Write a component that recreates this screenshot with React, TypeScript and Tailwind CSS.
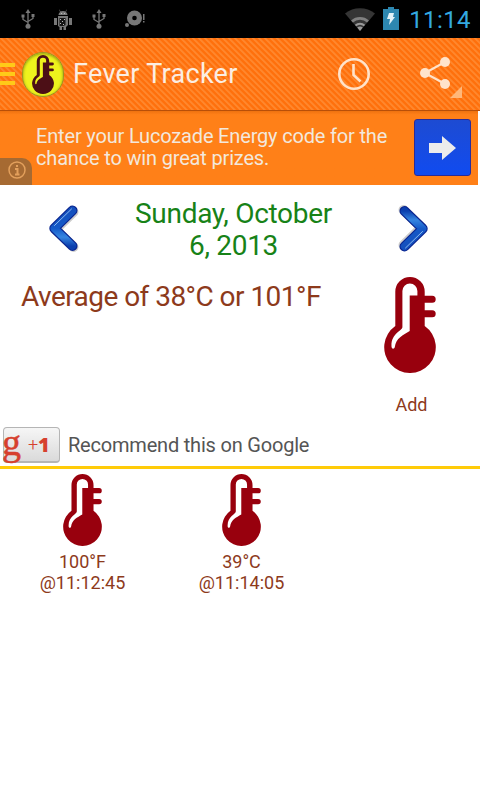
import type { ReactNode } from "react"

const readings = [
  { value: "100°F", time: "@11:12:45" },
  { value: "39°C", time: "@11:14:05" },
]

function Thermometer({ className }: { className: string }) {
  return (
    <svg viewBox="0 0 52 96" className={className} preserveAspectRatio="none">
      <path
        fill="currentColor"
        fillRule="evenodd"
        d="M11.3 14.7A14.7 14.7 0 0 1 40.7 14.7V18.7H48.2a3.5 3.5 0 0 1 0 7H40.7V33.3H48.2a3.5 3.5 0 0 1 0 7H40.7V49A25.8 25.8 0 1 1 11.3 49ZM18.4 14V50C18.4 54 7 56 7.5 69.5C7.8 72.5 10.3 72.3 10.8 70C12 61 19 58 25.7 54V18.5H33.4V14A7.5 7.5 0 0 0 18.4 14Z"
      />
    </svg>
  )
}

function Chevron({ className }: { className: string }) {
  return (
    <svg viewBox="0 0 34 50" className={className}>
      <defs>
        <linearGradient id="blue" x1="0" y1="0" x2="0" y2="1">
          <stop offset="0" stopColor="#1450bd" />
          <stop offset="0.5" stopColor="#1459c8" />
          <stop offset="0.75" stopColor="#3585e0" />
          <stop offset="1" stopColor="#0b3fae" />
        </linearGradient>
      </defs>
      <g fill="none" strokeLinecap="round" strokeLinejoin="round">
        <path d="M27.5 8L9.5 25.5L27.5 43" stroke="#000" strokeOpacity="0.2" strokeWidth="10" />
        <path d="M26.5 6.5L8.3 24.3L26.5 42" stroke="#0a2590" strokeWidth="10" />
        <path d="M26.5 6.5L8.3 24.3L26.5 42" stroke="url(#blue)" strokeWidth="7.5" />
        <path d="M25.5 5L8.5 21.5" stroke="#8db9ef" strokeWidth="1" />
      </g>
    </svg>
  )
}

function UsbIcon() {
  return (
    <svg viewBox="0 0 14 20" className="h-5 w-3.5" fill="none" stroke="#777" strokeWidth="1.3">
      <path d="M7 3V17M2 7V10.5L7 13.5M12 6V9.5L7 12.5" />
      <path d="M7 0L9.5 4H4.5Z" fill="#777" stroke="none" />
      <circle cx="7" cy="17.3" r="2.5" fill="#777" stroke="none" />
      <path d="M.5 5.500h3v3h-3zM10.500 5h3v3h-3z" fill="#777" stroke="none" />
    </svg>
  )
}

function StatusBar() {
  return (
    <header className="flex h-[38px] items-center bg-black pl-[21px] pr-[9px]">
      <UsbIcon />
      <svg viewBox="0 0 18 21" className="ml-[19px] h-[21px] w-[18px]" fill="#777">
        <path d="M4.500 6a4.500 4 0 0 1 9 0zM5 0l2 3h-1zM13 0l-2 3h1zM4 7h10v9l-2 2v3H9.500v-3H8v3H5.500v-3L4 17zM0 9h3v7H0zM15 9h3v7h-3z" />
        <path d="M5.500 9h6v7l-2 1h-4z" fill="#151515" />
        <path d="M6 10h1v1H6zM8 12h1v1H8zM6 14h1v1H6zM10 10h1v1h-1zM9 15h1v1H9zM7 5h1V4H7zM10 5h1V4h-1z" fill="#bbb" />
      </svg>
      <div className="ml-[20px] flex">
        <UsbIcon />
      </div>
      <svg viewBox="0 0 21 18" className="ml-[19px] h-[18px] w-[21px]" fill="#777">
        <circle cx="9.5" cy="8" r="7.5" />
        <circle cx="9.5" cy="8" r="2.3" fill="#000" />
        <circle cx="2" cy="15" r="2" />
        <path d="M18 4h1.500v6H18zM18 11h1.500v1.500H18z" />
      </svg>
      <svg viewBox="0 0 30 23" className="ml-auto h-[23px] w-[30px]">
        <path d="M0 5.5A24 24 0 0 1 30 5.5L15 23Z" fill="#353535" />
        <path d="M7 13.5A12 12 0 0 1 23 13.5" fill="none" stroke="#808080" strokeWidth="2.8" />
        <path d="M10.5 17.5A7 7 0 0 1 19.5 17.5" fill="none" stroke="#999" strokeWidth="2" />
        <path d="M12.2 19.5Q15 17.500 17.800 19.500L15 23Z" fill="#999" />
      </svg>
      <svg viewBox="0 0 16 24" className="ml-2 mb-[2px] h-6 w-4">
        <path d="M0 3H5V1H11V3H16V24H0Z" fill="#2d87b0" />
        <path d="M6 7h5l-1 4h2L6 19l1-6H4z" fill="#e2f2f8" />
      </svg>
      <span className="ml-[10px] mt-px text-[24px] leading-none tracking-[0.4px] text-[#33a9e0]">11:14</span>
    </header>
  )
}

function ActionBar() {
  return (
    <div className="flex h-[73px] items-center border-b border-[#b84f08] bg-[#ff730f] bg-[repeating-linear-gradient(45deg,#ff872d_0px,#ff872d_1px,#ff700c_2px,#ff700c_3.400px,#ff872d_4.243px)] pr-[18px]">
      <div className="flex w-[15px] flex-col gap-[5px]">
        <i className="h-1 bg-[#ffca18]" />
        <i className="h-1 bg-[#ffca18]" />
        <i className="h-1 bg-[#ffca18]" />
      </div>
      <div className="ml-[7px] flex h-[45px] w-[42px] items-center justify-center rounded-full border border-[#9b9520] bg-[#eef31d] shadow-[inset_0_1px_3px_#8c9510]">
        <Thermometer className="h-[39px] w-[22px] text-[#4c0f16]" />
      </div>
      <h1 className="ml-[9px] text-[27px] tracking-[0.3px] text-[#fbeee3]">Fever Tracker</h1>
      <svg viewBox="0 0 32 32" className="ml-auto size-8" fill="none" stroke="#ffe3cb" strokeWidth="2.6">
        <circle cx="16" cy="16" r="14.7" />
        <path d="M15.5 6V17L22.5 23.5" />
      </svg>
      <svg viewBox="0 0 42 42" className="ml-[50px] mt-2 size-[42px]" fill="#ffe3cb">
        <path d="M25 5L5 16L25 27" fill="none" stroke="#ffe3cb" strokeWidth="2.2" />
        <circle cx="25" cy="5" r="5" />
        <circle cx="5" cy="16" r="5" />
        <circle cx="25" cy="27" r="5" />
        <path d="M42 29V41H30Z" fill="#ffb779" />
      </svg>
    </div>
  )
}

function AdBanner() {
  return (
    <div className="relative flex h-[74px] w-[478px] bg-linear-to-b from-[#ee7210] from-0% to-[#ff8018] to-5%">
      <p className="ml-9 mt-[14px] w-[370px] text-[20px] leading-[22px] tracking-[-0.17px] text-[#f3e8dc]">
        Enter your Lucozade Energy code for the
        <br />
        chance to win great prizes.
      </p>
      <div className="ml-2 mt-2 flex h-[57px] w-[57px] items-center justify-center rounded-[3px] border border-[#2a2b97] bg-linear-to-b from-[#1d4bd2] to-[#104bf0]">
        <svg viewBox="0 0 27 24" className="h-6 w-[27px]" fill="#ececec">
          <path d="M0 7H13V0L27 12L13 24V17H0Z" />
        </svg>
      </div>
      <div className="absolute bottom-0 left-0 flex h-[27px] w-8 items-start rounded-tr-[10px] bg-[#a66a32] pl-2 pt-[3px]">
        <svg viewBox="0 0 18 18" className="size-[18px]" fill="none" stroke="#e3a05c" strokeWidth="1.5">
          <circle cx="9" cy="9" r="8" />
          <path d="M9 4V6M7 8H9.5V13M7 13.5H11.5" strokeWidth="2" />
        </svg>
      </div>
    </div>
  )
}

function Caption({ children }: { children: ReactNode }) {
  return <span className="text-[18px] leading-[21px] text-[#8d3a1b]">{children}</span>
}

export default function App() {
  return (
    <div className="h-[800px] w-[480px] overflow-hidden bg-white font-['Roboto',sans-serif]">
      <StatusBar />
      <ActionBar />
      <AdBanner />

      <div className="flex h-[87px] items-start pl-[46px] pr-[49px] pt-[13px]">
        <Chevron className="mt-[6px] h-[50px] w-[34px]" />
        <h2 className="flex-1 pr-[10px] text-center text-[28px] leading-8 tracking-[-0.3px] text-[#178217]">
          Sunday, October
          <br />
          6, 2013
        </h2>
        <Chevron className="mt-[5px] h-[50px] w-[34px] rotate-180" />
      </div>

      <div className="flex h-[155px] justify-between pl-[21px] pr-[44px]">
        <p className="mt-[9px] text-[28px] leading-8 tracking-[-0.54px] text-[#8d3a1b]">Average of 38°C or 101°F</p>
        <div className="flex w-[52px] flex-col items-center pt-[5px]">
          <Thermometer className="h-24 w-[52px] text-[#98000d]" />
          <div className="mt-[21px] pl-[3px]">
            <Caption>Add</Caption>
          </div>
        </div>
      </div>

      <div className="flex h-[39px] items-start pl-[3px]">
        <div className="flex h-9 w-[57px] items-start rounded-[4px] border border-b-2 border-[#b5b5b5] bg-linear-to-b from-[#f6f6f6] to-[#dadada] text-[#d6402e]">
          <span className="-ml-[2px] -mt-[5px] w-[26px] font-['Liberation_Serif',serif] text-[38px] leading-none [-webkit-text-stroke:0.5px]">
            g
          </span>
          <span className="mt-[3px] w-[10px] text-[18px] leading-7 font-light">+</span>
          <span className="mt-[3px] font-['Open_Sans',sans-serif] text-[20px] leading-7 font-extrabold">1</span>
        </div>
        <span className="ml-2 mt-1 text-[20px] leading-7 tracking-[-0.2px] text-[#555]">Recommend this on Google</span>
      </div>
      <div className="h-[3px] bg-[#ffcb08]" />

      <div className="flex pl-[3px] pt-[5px]">
        {readings.map((reading) => (
          <div key={reading.time} className="flex w-[159px] flex-col items-center">
            <Thermometer className="mb-[5px] h-[72px] w-[39px] text-[#98000d]" />
            <Caption>{reading.value}</Caption>
            <Caption>{reading.time}</Caption>
          </div>
        ))}
      </div>
    </div>
  )
}
